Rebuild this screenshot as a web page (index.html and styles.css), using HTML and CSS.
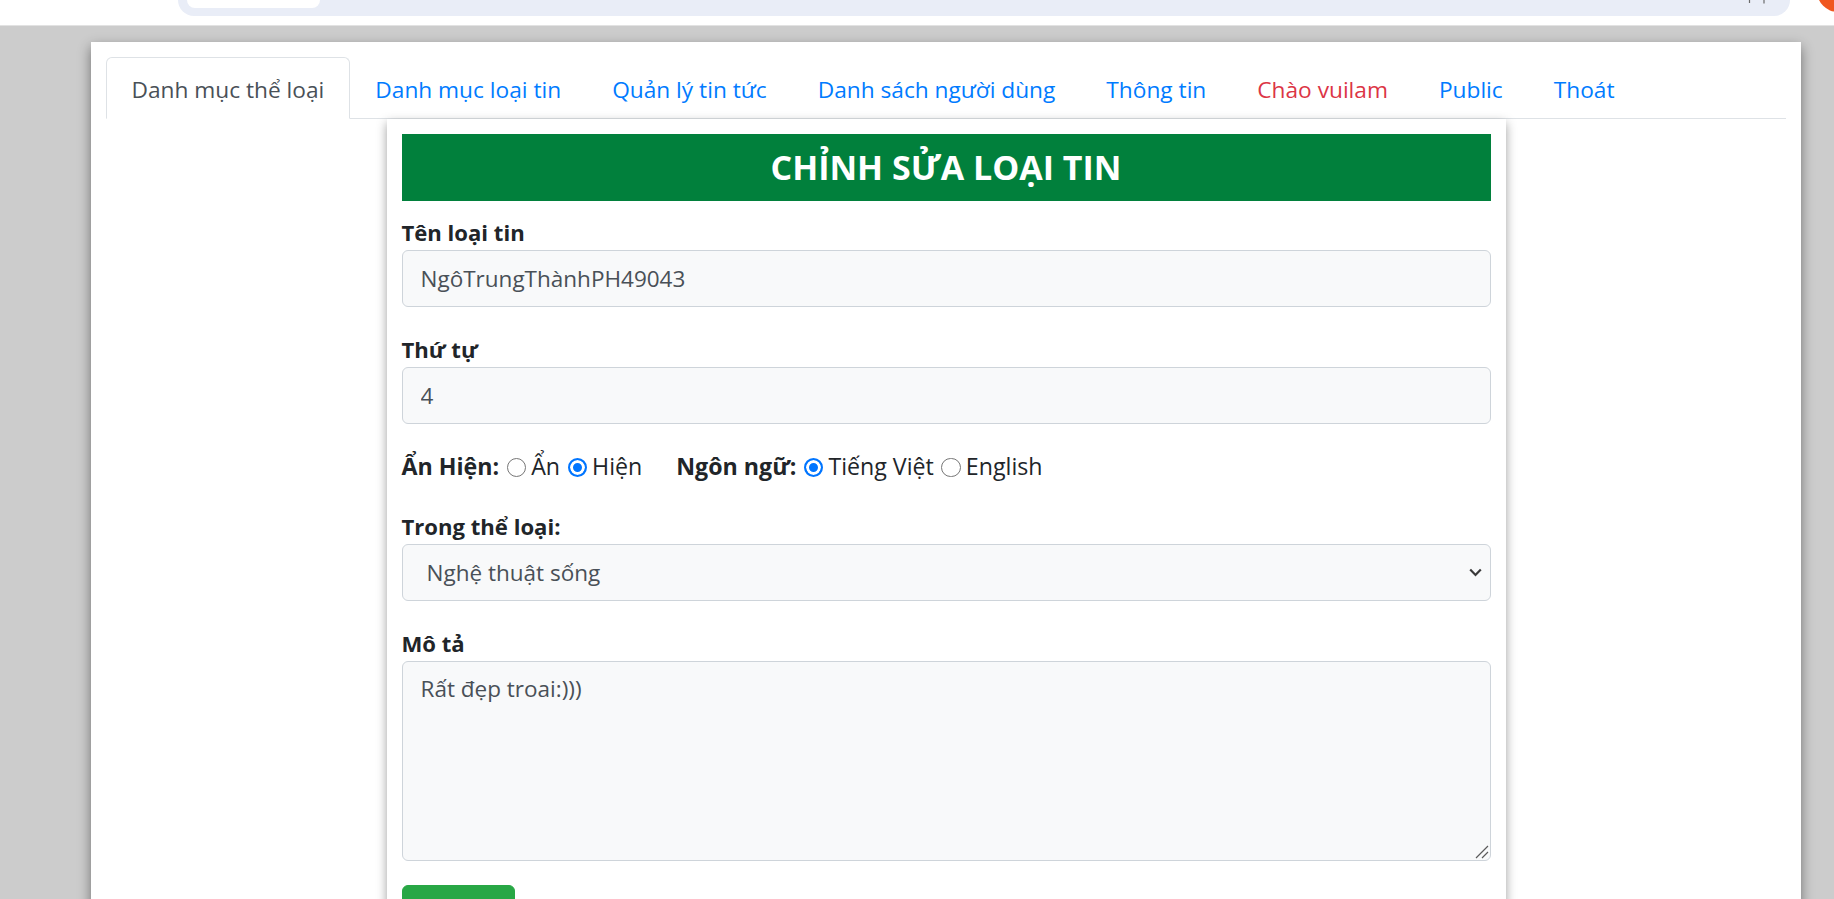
FILE: index.html
```html
<!DOCTYPE html>
<html lang="vi">
<head>
<meta charset="utf-8">
<title>Chỉnh sửa loại tin</title>
<link rel="stylesheet" href="styles.css">
</head>
<body>
<div class="chrome">
  <div class="omnibox">
    <div class="site-chip"></div>
    <svg class="omni-icons" width="24" height="6" viewBox="0 0 24 6"><path d="M1.5 0 V3 M16 0 V3.5" stroke="#6b6b6b" stroke-width="1.2"/></svg>
  </div>
  <div class="avatar"></div>
</div>
<div class="stage">
  <div class="panel">
    <ul class="tabs">
      <li><a class="tab active" href="#">Danh mục thể loại</a></li>
      <li><a class="tab" href="#">Danh mục loại tin</a></li>
      <li><a class="tab" href="#">Quản lý tin tức</a></li>
      <li><a class="tab" href="#">Danh sách người dùng</a></li>
      <li><a class="tab" href="#">Thông tin</a></li>
      <li><a class="tab tab-user" href="#">Chào vuilam</a></li>
      <li><a class="tab" href="#">Public</a></li>
      <li><a class="tab" href="#">Thoát</a></li>
    </ul>
    <div class="card">
      <h4 class="card-title">CHỈNH SỬA LOẠI TIN</h4>
      <form class="form">
        <div class="group">
          <label class="label">Tên loại tin</label>
          <input class="field" type="text" value="NgôTrungThànhPH49043">
        </div>
        <div class="group">
          <label class="label">Thứ tự</label>
          <input class="field" type="text" value="4">
        </div>
        <div class="group radio-row">
          <span class="inline-label">Ẩn Hiện:</span><input class="radio" type="radio" name="anhien"><span>Ẩn</span><input class="radio" type="radio" name="anhien" checked><span>Hiện</span><span class="inline-label second">Ngôn ngữ:</span><input class="radio" type="radio" name="lang" checked><span>Tiếng Việt</span><input class="radio" type="radio" name="lang"><span>English</span>
        </div>
        <div class="group">
          <label class="label">Trong thể loại:</label>
          <div class="select-wrap">
            <select class="field select">
              <option>Nghệ thuật sống</option>
            </select>
            <svg class="chevron" width="13" height="9" viewBox="0 0 13 9"><polyline points="1.2,1.5 6.5,7 11.8,1.5" fill="none" stroke="#3a3a3a" stroke-width="2.2"/></svg>
          </div>
        </div>
        <div class="group">
          <label class="label">Mô tả</label>
          <div class="area-wrap">
            <textarea class="field area">Rất đẹp troai:)))</textarea>
            <svg class="grip" width="14" height="14" viewBox="0 0 14 14"><path d="M13 1 L1 13 M13 7 L7 13" stroke="#5a5a5a" stroke-width="1.2" fill="none"/></svg>
          </div>
        </div>
        <button class="btn" type="button">Lưu lại</button>
      </form>
    </div>
  </div>
</div>
</body>
</html>
```

FILE: styles.css
```css
html, body {
  margin: 0;
  padding: 0;
}

body {
  height: 899px;
  overflow: hidden;
  background: #cccccc;
  font-family: "Open Sans", "Noto Sans", sans-serif;
  color: #212529;
}

/* browser chrome strip */
.chrome {
  position: relative;
  height: 25px;
  background: #ffffff;
  border-bottom: 1px solid #e2e2e2;
  overflow: hidden;
}

.omnibox {
  position: relative;
  display: flex;
  margin-left: 178px;
  width: 1612px;
  height: 16px;
  background: #e9edf7;
  border-radius: 0 0 16px 16px;
}

.site-chip {
  margin-left: 9px;
  width: 133px;
  height: 8px;
  background: #ffffff;
  border-radius: 0 0 8px 8px;
}

.omni-icons {
  position: absolute;
  left: 1570px;
  top: 0;
}

.avatar {
  position: absolute;
  left: 1817px;
  top: -30px;
  width: 42px;
  height: 42px;
  border-radius: 50%;
  background: #f0571f;
}

/* page */
.stage {
  padding-top: 16px;
}

.panel {
  box-sizing: border-box;
  margin-left: 91px;
  width: 1710px;
  height: 900px;
  padding: 15px;
  background: #ffffff;
  box-shadow: 0 5px 12px rgba(0, 0, 0, 0.45);
}

.tabs {
  display: flex;
  margin: 0;
  padding: 0;
  list-style: none;
  border-bottom: 1px solid #dee2e6;
}

.tab {
  display: block;
  margin-bottom: -1px;
  padding: 14px 24.5px 10px;
  border: 1px solid transparent;
  border-radius: 6px 6px 0 0;
  font-size: 22.7px;
  line-height: 36px;
  color: #007bff;
  text-decoration: none;
}

.tab.active {
  color: #495057;
  background: #ffffff;
  border-color: #dee2e6 #dee2e6 #ffffff;
}

.tab-user {
  color: #dc3545;
}

.card {
  box-sizing: border-box;
  width: 1119px;
  height: 800px;
  margin: 0 auto;
  padding: 15px;
  background: #ffffff;
  box-shadow: 0 4px 10px rgba(0, 0, 0, 0.38);
}

.card-title {
  display: flex;
  align-items: center;
  justify-content: center;
  height: 67px;
  margin: 0;
  background: #01803c;
  color: #ffffff;
  font-size: 34px;
  font-weight: 700;
  line-height: 1.2;
}

.form {
  padding-top: 13px;
}

.group {
  margin-bottom: 24px;
}

.label {
  display: block;
  font-size: 22.1px;
  font-weight: 700;
  line-height: 36px;
  color: #212529;
}

.field {
  display: block;
  box-sizing: border-box;
  width: 100%;
  height: 57px;
  margin: 0;
  padding: 0 18px;
  border: 1px solid #ced4da;
  border-radius: 6px;
  background: #f8f9fa;
  font-family: "Open Sans", "Noto Sans", sans-serif;
  font-size: 22.5px;
  color: #495057;
  outline: none;
}

.radio-row {
  box-sizing: border-box;
  height: 36px;
  padding-top: 1px;
  font-size: 23.2px;
  line-height: 35px;
  color: #212529;
  white-space: nowrap;
}

.inline-label {
  font-size: 23.2px;
  font-weight: 700;
}

.inline-label.second {
  margin-left: 34px;
}

.radio {
  appearance: none;
  -webkit-appearance: none;
  display: inline-block;
  box-sizing: border-box;
  width: 19.5px;
  height: 19.5px;
  margin: 0 5px 0 7.5px;
  border: 1.5px solid #767676;
  border-radius: 50%;
  background: #ffffff;
  vertical-align: -2px;
}

.radio:checked {
  border: 2px solid #0075ff;
  background: #0075ff;
  box-shadow: inset 0 0 0 3px #ffffff;
}

.select-wrap,
.area-wrap {
  position: relative;
}

.select {
  appearance: none;
  -webkit-appearance: none;
  padding-left: 24px;
}

.chevron {
  position: absolute;
  right: 9px;
  top: 24px;
  pointer-events: none;
}

.area {
  height: 200px;
  padding: 9px 18px;
  line-height: 36px;
  resize: none;
}

.grip {
  position: absolute;
  right: 2px;
  bottom: 2px;
  pointer-events: none;
}

.btn {
  display: block;
  box-sizing: border-box;
  width: 113px;
  height: 57px;
  padding: 9px 18px;
  border: 1px solid #28a745;
  border-radius: 6px;
  background: #28a745;
  color: #ffffff;
  font-family: "Open Sans", "Noto Sans", sans-serif;
  font-size: 22.4px;
  line-height: 36px;
}
```
